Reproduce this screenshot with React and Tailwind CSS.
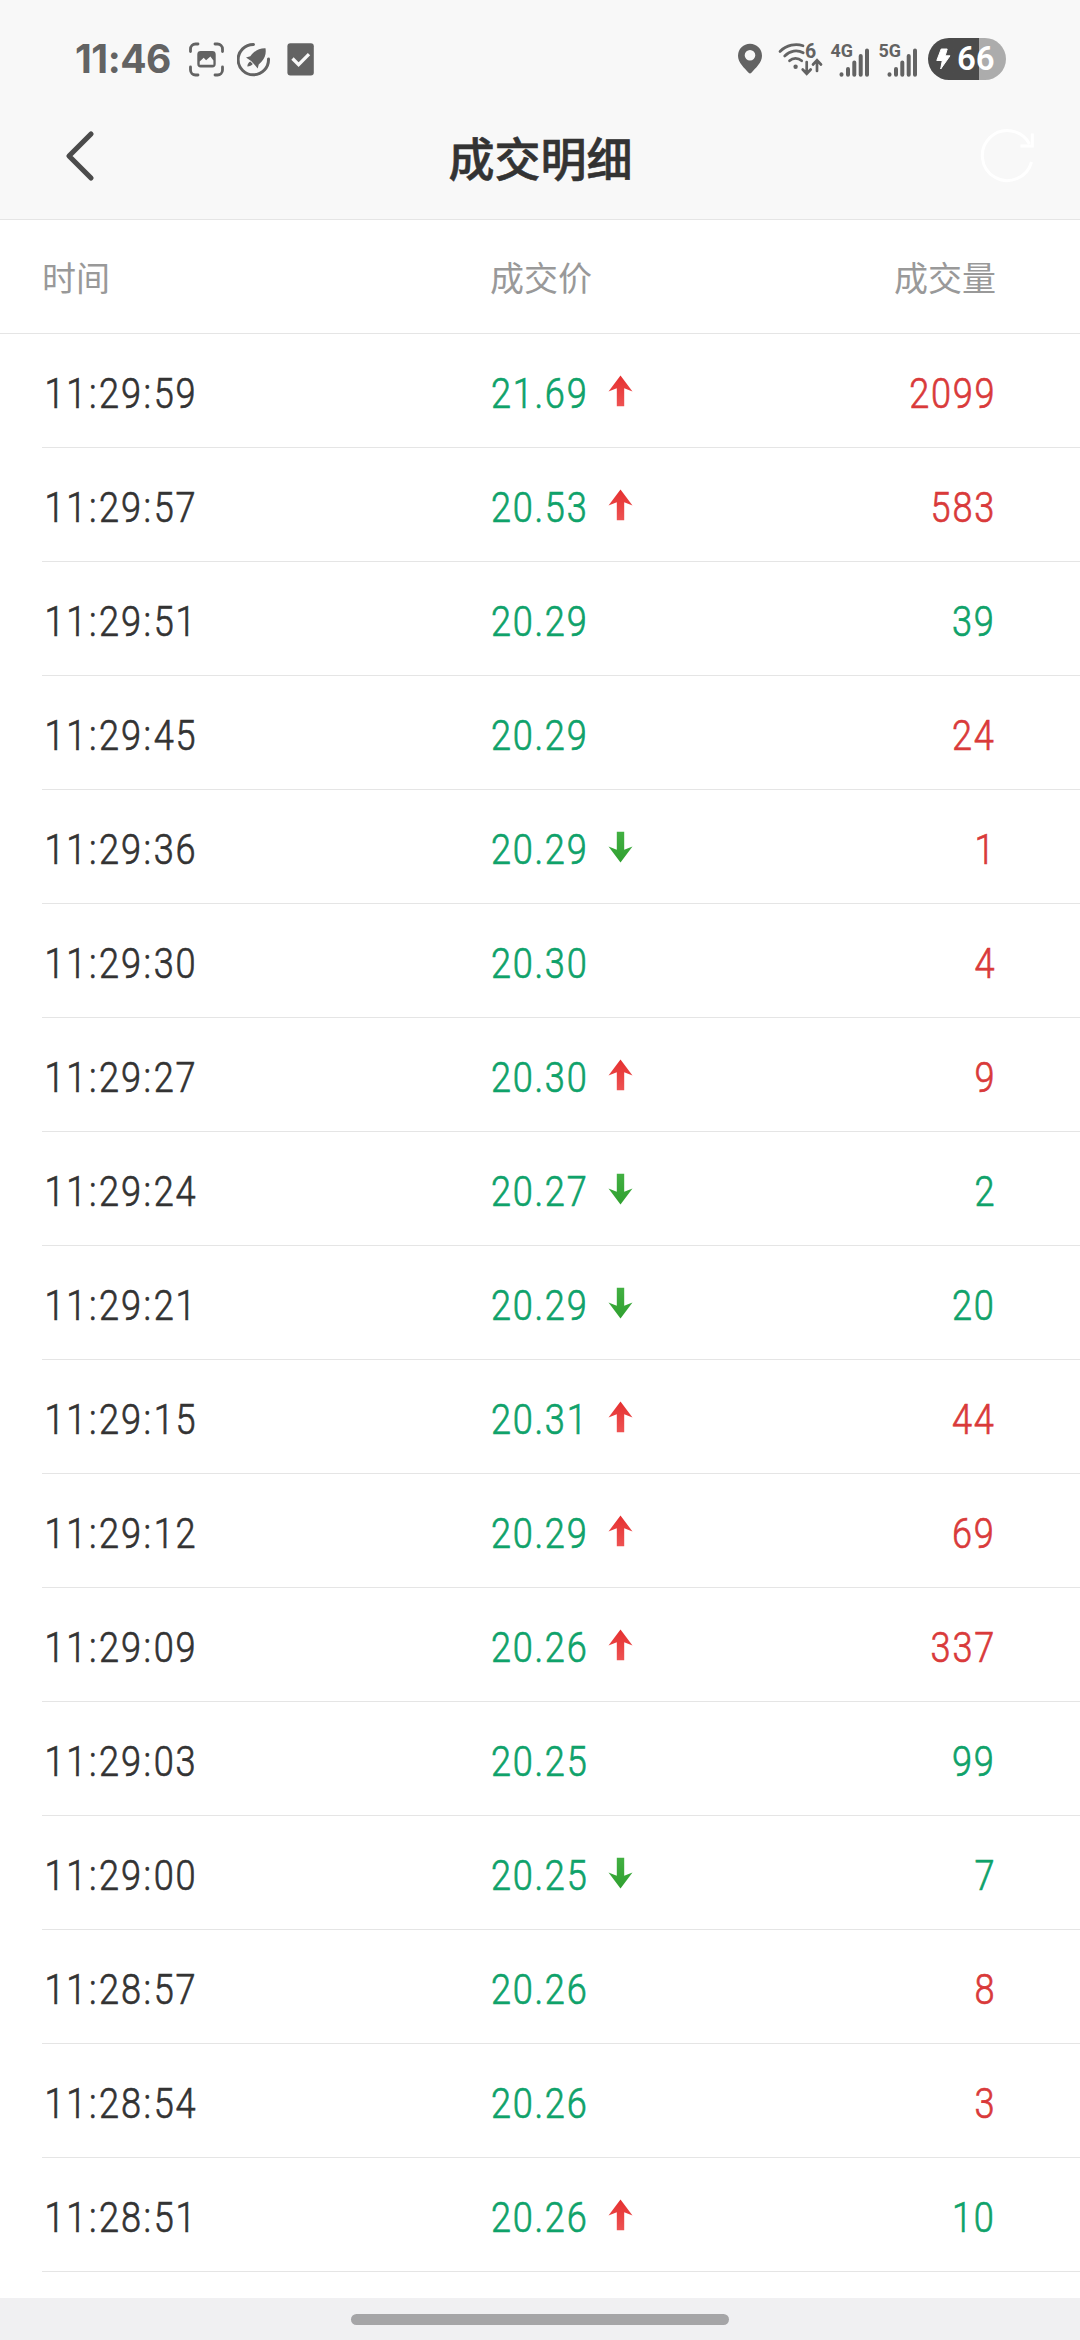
const trades = [
  { time: "11:29:59", price: "21.69", dir: "up", volume: 2099, side: "buy" },
  { time: "11:29:57", price: "20.53", dir: "up", volume: 583, side: "buy" },
  { time: "11:29:51", price: "20.29", volume: 39, side: "sell" },
  { time: "11:29:45", price: "20.29", volume: 24, side: "buy" },
  { time: "11:29:36", price: "20.29", dir: "down", volume: 1, side: "buy" },
  { time: "11:29:30", price: "20.30", volume: 4, side: "buy" },
  { time: "11:29:27", price: "20.30", dir: "up", volume: 9, side: "buy" },
  { time: "11:29:24", price: "20.27", dir: "down", volume: 2, side: "sell" },
  { time: "11:29:21", price: "20.29", dir: "down", volume: 20, side: "sell" },
  { time: "11:29:15", price: "20.31", dir: "up", volume: 44, side: "buy" },
  { time: "11:29:12", price: "20.29", dir: "up", volume: 69, side: "buy" },
  { time: "11:29:09", price: "20.26", dir: "up", volume: 337, side: "buy" },
  { time: "11:29:03", price: "20.25", volume: 99, side: "sell" },
  { time: "11:29:00", price: "20.25", dir: "down", volume: 7, side: "sell" },
  { time: "11:28:57", price: "20.26", volume: 8, side: "buy" },
  { time: "11:28:54", price: "20.26", volume: 3, side: "buy" },
  { time: "11:28:51", price: "20.26", dir: "up", volume: 10, side: "sell" },
];

const SignalIcon = ({ label }) => (
  <svg width="40" height="44" viewBox="0 0 40 44" fill="none" stroke="#636363" strokeWidth="4" strokeLinecap="round">
    <text x="0.5" y="20" fontSize="19" fontWeight="700" fill="#636363" stroke="none" className="font-['Roboto',sans-serif]" textLength="22.5" lengthAdjust="spacingAndGlyphs">
      {label}
    </text>
    <path d="M11.5 37.2v0.6M18 32v5.8M24.3 25.5v12.3M30.7 19v18.8M37 13.5v24.3" />
  </svg>
);

const StatusBar = () => (
  <div className="h-[93px] pt-[37px] pl-[75px] pr-[74px] flex items-start text-[#636363]">
    <span className="w-[114px] h-[44px] leading-[44px] text-[39px] font-bold tracking-[-0.5px] font-['Inter',sans-serif]">11:46</span>
    <svg width="36" height="44" viewBox="0 0 36 44" fill="none">
      <path d="M9 7H6.5A5 5 0 0 0 1.5 12v2.5M26 7h2.5a5 5 0 0 1 5 5v2.5M33.5 30v3a5 5 0 0 1-5 5H26M9 38H6.5a5 5 0 0 1-5-5v-3" stroke="#636363" strokeWidth="2.8" strokeLinecap="round" />
      <rect x="9.2" y="15" width="16.6" height="14.6" rx="2.5" stroke="#636363" strokeWidth="1.8" fill="#636363" />
      <path d="M10.7 27.8v-3.3l4-3.8 2.4 2.5 4.3-3.8 3 4v4.4z" fill="#f8f8f8" />
    </svg>
    <svg className="ml-3" width="34" height="44" viewBox="0 0 34 44" fill="none">
      <path d="M16.5 7.4A15.2 15.2 0 1 0 31.5 22" stroke="#636363" strokeWidth="3" strokeLinecap="round" />
      <path d="M28.5 11.2c.8 5-.3 9.3-4 13.6l-2.8 2.7-1 4-4-4.8-2.6-2.6-5.1-3.6 4.3-1.2c4.3-5.6 9-8.3 15.2-8.1zM13.3 24.5l2.5 2.5c-1.1 1.5-3 2.3-5.5 2.4.2-2.2 1.2-4 3-4.9z" fill="#636363" />
    </svg>
    <svg className="ml-4" width="28" height="44" viewBox="0 0 28 44" fill="none">
      <rect x="0.4" y="6.2" width="26.4" height="32.4" rx="3" fill="#636363" />
      <path d="M5.5 21.5l6.1 6.1L22 17.2" stroke="#f8f8f8" strokeWidth="3.3" />
    </svg>

    <div className="ml-auto flex">
      <svg width="24" height="44" viewBox="0 0 24 44">
        <path fillRule="evenodd" d="M12 6.7a12 12 0 0 1 12 12c0 7-6.5 12.3-10.6 17a1.9 1.9 0 0 1-2.8 0C6.5 31 0 25.7 0 18.7a12 12 0 0 1 12-12zM12 13a5.3 5.3 0 1 0 0 10.6A5.3 5.3 0 0 0 12 13z" fill="#636363" />
      </svg>
      <svg className="ml-4" width="45" height="44" viewBox="0 0 45 44" fill="none" stroke="#636363" strokeWidth="2.7" strokeLinecap="round">
        <path d="M2 14.5C8.5 7.8 18 6.2 25 8.8M6.7 19c5.3-5.5 12.5-6.5 18.5-3.2M11.5 23.8c3.4-3.2 8.6-3.2 12.2 0" />
        <circle cx="17.6" cy="29.8" r="2.2" fill="#636363" stroke="none" />
        <text x="27" y="20.5" fontSize="19.5" fontWeight="700" fill="#636363" stroke="none" className="font-['Roboto',sans-serif]">6</text>
        <path d="M28.7 25v11.5M24.7 32.5l4 4.2 4-4.2M39 34V23.5M35 27.5l4-4.2 4 4.2" />
      </svg>
      <div className="ml-[7px]">
        <SignalIcon label="4G" />
      </div>
      <div className="ml-2">
        <SignalIcon label="5G" />
      </div>
      <div className="ml-[10px] mt-[1px] w-[78px] h-[42px] rounded-full overflow-hidden flex items-center bg-linear-to-r from-[#4b4b4b] from-65% to-[#acacac] to-65%">
        <svg className="ml-[8px] shrink-0" width="15" height="22" viewBox="0 0 15 22">
          <path d="M5.2 1h6L9.2 7.8H14L4.7 21l1.6-8.5H.8z" fill="#fff" stroke="#fff" strokeLinejoin="round" />
        </svg>
        <span className="ml-[6px] text-[33px] leading-[42px] font-semibold text-white font-['Roboto',sans-serif]">66</span>
      </div>
    </div>
  </div>
);

const NavBar = () => (
  <div className="h-[127px] pl-[64px] pr-[44px] flex items-center justify-between border-b border-[#e5e5e5]">
    <svg width="56" height="56" viewBox="0 0 56 56" fill="none" stroke="#4b4b4b" strokeWidth="5.2" strokeLinecap="round" strokeLinejoin="round">
      <path d="M27 6L5 28l22 22" />
    </svg>
    <h1 className="mr-[19px] text-[46px] leading-[60px] font-medium [-webkit-text-stroke:0.6px] text-[#333] font-['Noto_Sans_CJK_SC',sans-serif]">成交明细</h1>
    <svg width="56" height="56" viewBox="0 0 56 56" fill="none" stroke="#fff" strokeWidth="3">
      <path d="M51.5 34A25 25 0 1 1 49.5 16" />
      <path d="M52.3 5.5v12.5H40.5" />
    </svg>
  </div>
);

const Arrow = ({ dir }) => (
  <svg className={dir === "down" ? "rotate-180" : ""} width="25" height="32" viewBox="0 0 25 32">
    <defs>
      <linearGradient id={`arrow-${dir}`} x1="0" y1="0" x2="0" y2="1">
        <stop offset="0" stopColor={dir === "up" ? "#e53030" : "#30a030"} />
        <stop offset="1" stopColor={dir === "up" ? "#ee5252" : "#42b042"} />
      </linearGradient>
    </defs>
    <path d="M12.5 0.5L24.5 16.5L16.2 13.3V31.2H8.8V13.3L0.5 16.5z" fill={`url(#arrow-${dir})`} />
  </svg>
);

const TradeRow = ({ trade }) => (
  <li className="h-[114px] ml-[42px] pr-[84px] pt-[6px] flex items-center border-b border-[#e5e5e5] text-[42px] leading-[50px] font-light [-webkit-text-stroke:0.7px] tracking-[2px] font-['Roboto',sans-serif]">
    <div className="w-[449px] text-[#333]">
      <span className="inline-block origin-left scale-x-[0.86] pl-[3px]">
        {trade.time.split(":").map((part, i) => (
          <span key={i}>
            {i > 0 && <span className="px-[1px]">:</span>}
            {part}
          </span>
        ))}
      </span>
    </div>
    <div className="flex items-center text-[#0fa26a]">
      <span className="w-[117px]">
        <span className="inline-block origin-left scale-x-[0.86]">{trade.price}</span>
      </span>
      {trade.dir && (
        <span className="mb-[6px]">
          <Arrow dir={trade.dir} />
        </span>
      )}
    </div>
    <div className={`ml-auto ${trade.side === "buy" ? "text-[#d93a3a]" : "text-[#0fa26a]"}`}>
      <span className="inline-block origin-right scale-x-[0.86]">{trade.volume}</span>
    </div>
  </li>
);

export default function App() {
  return (
    <div className="w-[1080px] h-[2340px] flex flex-col overflow-hidden bg-white">
      <header className="bg-[#f8f8f8]">
        <StatusBar />
        <NavBar />
      </header>
      <div className="h-[114px] pl-[42px] pr-[84px] pt-[1px] flex items-center border-b border-[#e5e5e5] text-[34px] leading-[44px] text-[#999] font-['Noto_Sans_CJK_SC',sans-serif]">
        <span className="w-[448px]">时间</span>
        <span>成交价</span>
        <span className="ml-auto">成交量</span>
      </div>
      <ul className="flex-1">
        {trades.map((trade) => (
          <TradeRow key={trade.time} trade={trade} />
        ))}
      </ul>
      <footer className="h-[42px] pt-4 bg-[#f0f0f2]">
        <div className="mx-auto w-[378px] h-[11px] rounded-full bg-[#a5a5a7]" />
      </footer>
    </div>
  );
}
